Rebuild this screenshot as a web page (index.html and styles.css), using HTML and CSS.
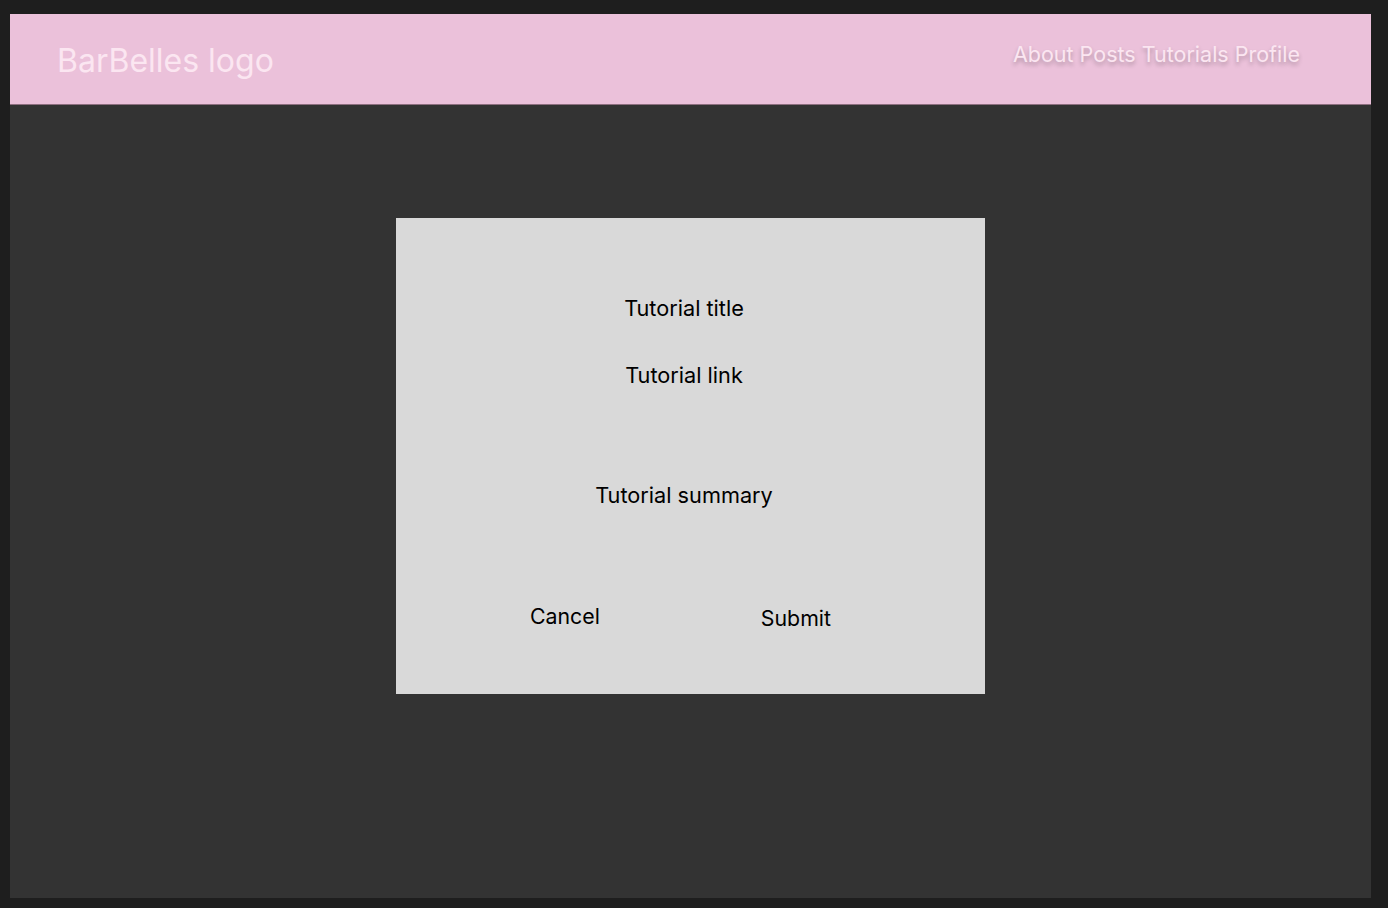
FILE: index.html
```html
<!DOCTYPE html>
<html>
<head>
<meta charset="utf-8">
<link rel="stylesheet" href="styles.css">
</head>
<body>
<div class="frame">
  <header class="topbar">
    <div class="logo">BarBelles logo</div>
    <nav class="nav">About Posts Tutorials Profile</nav>
  </header>
  <main class="content">
    <form class="card">
      <div class="field title">Tutorial title</div>
      <div class="field link">Tutorial link</div>
      <div class="field summary">Tutorial summary</div>
      <div class="actions">
        <span class="btn cancel">Cancel</span>
        <span class="btn submit">Submit</span>
      </div>
    </form>
  </main>
</div>
</body>
</html>
```

FILE: styles.css
```css
html, body {
  margin: 0;
  padding: 0;
  background: #1e1e1e;
  font-family: Inter, "Noto Sans", sans-serif;
}
body {
  padding: 14px 17px 10px 10px;
  height: 908px;
  box-sizing: border-box;
}
.frame {
  width: 1361px;
  height: 884px;
  background: #333333;
  display: flex;
  flex-direction: column;
}
.topbar {
  height: 91px;
  background: #ebc1da;
  border-bottom: 1px solid #8e6f80;
  display: flex;
  justify-content: space-between;
  align-items: flex-start;
  box-sizing: border-box;
}
.logo {
  margin: 31px 0 0 47px;
  font-size: 32px;
  line-height: 1;
  color: #fbe6f1;
}
.nav {
  margin: 30px 71px 0 0;
  font-size: 21.5px;
  line-height: 1;
  color: #fbe6f1;
  text-shadow: 0 3px 4px rgba(0,0,0,0.25);
}
.content {
  flex: 1;
  padding: 113px 0 0 386px;
}
.card {
  width: 589px;
  height: 476px;
  background: #d9d9d9;
  display: flex;
  flex-direction: column;
  align-items: center;
  color: #000;
  font-size: 21.7px;
  line-height: 1;
  margin: 0;
  box-sizing: border-box;
  padding: 80px 13px 0 0;
}
.field.link { margin-top: 45px; }
.field.summary { margin-top: 99px; }
.actions {
  align-self: stretch;
  display: flex;
  padding-left: 134px;
  margin-top: 99px;
  font-size: 21.3px;
}
.btn.submit { margin-left: 161px; margin-top: 2px; }
```
